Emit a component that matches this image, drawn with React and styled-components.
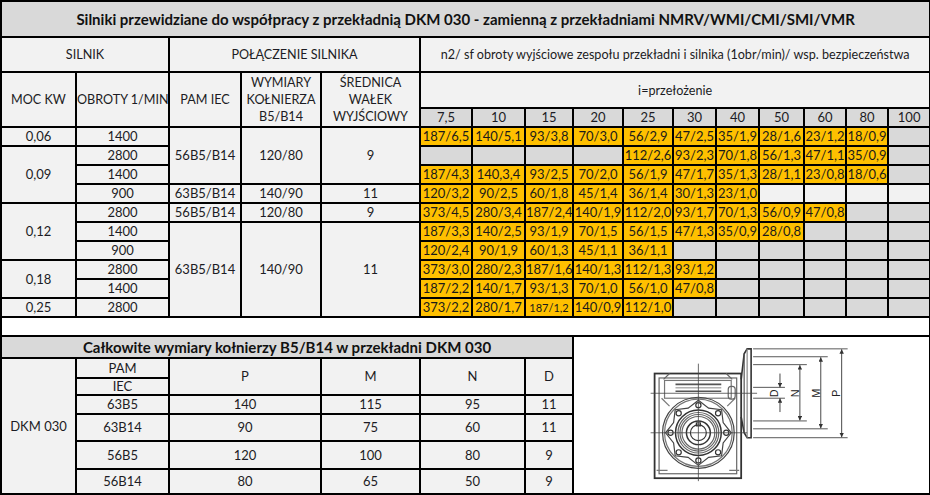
import React from 'react'
import styled, { createGlobalStyle } from 'styled-components'

const GlobalStyle = createGlobalStyle`
  html, body {
    margin: 0;
    padding: 0;
    background: #ffffff;
  }
  body {
    font-family: Lato, "Open Sans", sans-serif;
    color: #1c1c24;
  }
`

const ratios = ['7,5', '10', '15', '20', '25', '30', '40', '50', '60', '80', '100']
const colWidths = [75, 93, 72, 80, 99, 52, 53, 48, 50, 50, 43, 43, 45, 42, 42, 42]

// value rows: o = orange with text, g = grey, l = light
const fill = (vals, total, rest) =>
  vals.concat(Array(total - vals.length).fill(rest))

const dataRows = [
  {
    left: [
      { text: '0,06' },
      { text: '1400' },
      { text: '56B5/B14', rows: 3 },
      { text: '120/80', rows: 3 },
      { text: '9', rows: 3 },
    ],
    values: fill(['187/6,5', '140/5,1', '93/3,8', '70/3,0', '56/2,9', '47/2,5', '35/1,9', '28/1,6', '23/1,2', '18/0,9'], 11, 'g'),
  },
  {
    left: [{ text: '0,09', rows: 3 }, { text: '2800' }],
    values: ['g', 'g', 'g', 'g', '112/2,6', '93/2,3', '70/1,8', '56/1,3', '47/1,1', '35/0,9', 'g'],
  },
  {
    left: [{ text: '1400' }],
    values: fill(['187/4,3', '140,3,4', '93/2,5', '70/2,0', '56/1,9', '47/1,7', '35/1,3', '28/1,1', '23/0,8', '18/0,6'], 11, 'g'),
  },
  {
    left: [{ text: '900' }, { text: '63B5/B14' }, { text: '140/90' }, { text: '11' }],
    values: fill(['120/3,2', '90/2,5', '60/1,8', '45/1,4', '36/1,4', '30/1,3', '23/1,0'], 11, 'l'),
  },
  {
    left: [
      { text: '0,12', rows: 3 },
      { text: '2800' },
      { text: '56B5/B14' },
      { text: '120/80' },
      { text: '9' },
    ],
    values: fill(['373/4,5', '280/3,4', '187/2,4', '140/1,9', '112/2,0', '93/1,7', '70/1,3', '56/0,9', '47/0,8'], 11, 'g'),
  },
  {
    left: [
      { text: '1400' },
      { text: '63B5/B14', rows: 5 },
      { text: '140/90', rows: 5 },
      { text: '11', rows: 5 },
    ],
    values: fill(['187/3,3', '140/2,5', '93/1,9', '70/1,5', '56/1,5', '47/1,3', '35/0,9', '28/0,8'], 11, 'g'),
  },
  {
    left: [{ text: '900' }],
    values: fill(['120/2,4', '90/1,9', '60/1,3', '45/1,1', '36/1,1'], 11, 'g'),
  },
  {
    left: [{ text: '0,18', rows: 2 }, { text: '2800' }],
    values: fill(['373/3,0', '280/2,3', '187/1,6', '140/1,3', '112/1,3', '93/1,2'], 11, 'g'),
  },
  {
    left: [{ text: '1400' }],
    values: fill(['187/2,2', '140/1,7', '93/1,3', '70/1,0', '56/1,0', '47/0,8'], 11, 'g'),
  },
  {
    left: [{ text: '0,25' }, { text: '2800' }],
    values: fill(['373/2,2', '280/1,7', '*187/1,2', '140/0,9', '112/1,0'], 11, 'g'),
  },
]

const flanges = [
  { iec: '63B5', p: '140', m: '115', n: '95', d: '11', h: 19 },
  { iec: '63B14', p: '90', m: '75', n: '60', d: '11', h: 27 },
  { iec: '56B5', p: '120', m: '100', n: '80', d: '9', h: 28 },
  { iec: '56B14', p: '80', m: '65', n: '50', d: '9', h: 25 },
]

export default function App() {
  return (
    <>
      <GlobalStyle />
      <Sheet>
        <colgroup>
          {colWidths.map((w, i) => (
            <Col key={i} $w={w} />
          ))}
        </colgroup>
        <tbody>
          <Row $h={36}>
            <TitleCell colSpan={16}>
              Silniki przewidziane do współpracy z przekładnią DKM 030 - zamienną z przekładniami NMRV/WMI/CMI/SMI/VMR
            </TitleCell>
          </Row>
          <Row $h={35}>
            <HeadCell colSpan={2}>SILNIK</HeadCell>
            <HeadCell colSpan={3}>POŁĄCZENIE SILNIKA</HeadCell>
            <HeadCell colSpan={11}>
              n2/ sf obroty wyjściowe zespołu przekładni i silnika (1obr/min)/ wsp. bezpieczeństwa
            </HeadCell>
          </Row>
          <Row $h={36}>
            <HeadCell rowSpan={2}>MOC KW</HeadCell>
            <HeadCell rowSpan={2}>OBROTY 1/MIN</HeadCell>
            <HeadCell rowSpan={2}>PAM IEC</HeadCell>
            <HeadCell rowSpan={2} $multi>
              WYMIARY
              <br />
              KOŁNIERZA
              <br />
              B5/B14
            </HeadCell>
            <HeadCell rowSpan={2} $multi>
              ŚREDNICA
              <br />
              WAŁEK
              <br />
              WYJŚCIOWY
            </HeadCell>
            <HeadCell colSpan={11}>i=przełożenie</HeadCell>
          </Row>
          <Row $h={19}>
            {ratios.map((r) => (
              <RatioCell key={r}>{r}</RatioCell>
            ))}
          </Row>
          {dataRows.map((row, i) => (
            <Row key={i} $h={19}>
              {row.left.map((c, j) => (
                <InfoCell key={j} rowSpan={c.rows || 1}>
                  {c.text}
                </InfoCell>
              ))}
              {row.values.map((v, j) => {
                if (v === 'g' || v === 'l') return <ValueCell key={j} $tone={v} />
                const small = v.startsWith('*')
                return (
                  <ValueCell key={j} $tone="o" $small={small}>
                    {small ? v.slice(1) : v}
                  </ValueCell>
                )
              })}
            </Row>
          ))}
          <Row $h={19}>
            <BlankCell colSpan={16} />
          </Row>
          <Row $h={22}>
            <TitleCell colSpan={8} $size={15}>
              Całkowite wymiary kołnierzy B5/B14 w przekładni DKM 030
            </TitleCell>
            <DrawingCell colSpan={8} rowSpan={7}>
              <GearDrawing />
            </DrawingCell>
          </Row>
          <Row $h={20}>
            <InfoCell rowSpan={6}>DKM 030</InfoCell>
            <InfoCell>PAM</InfoCell>
            <InfoCell colSpan={2} rowSpan={2}>P</InfoCell>
            <InfoCell rowSpan={2}>M</InfoCell>
            <InfoCell colSpan={2} rowSpan={2}>N</InfoCell>
            <InfoCell rowSpan={2}>D</InfoCell>
          </Row>
          <Row $h={17}>
            <InfoCell>IEC</InfoCell>
          </Row>
          {flanges.map((f) => (
            <Row key={f.iec} $h={f.h}>
              <InfoCell>{f.iec}</InfoCell>
              <InfoCell colSpan={2}>{f.p}</InfoCell>
              <InfoCell>{f.m}</InfoCell>
              <InfoCell colSpan={2}>{f.n}</InfoCell>
              <InfoCell>{f.d}</InfoCell>
            </Row>
          ))}
        </tbody>
      </Sheet>
    </>
  )
}

function GearDrawing() {
  const cx = 697
  const cy = 432
  const lobes = []
  for (let i = 0; i < 16; i++) {
    const a = (i / 16) * Math.PI * 2 - Math.PI / 2
    const r = i % 2 === 0 ? 33 : 27
    lobes.push(`${(cx + r * Math.cos(a)).toFixed(1)},${(cy + r * Math.sin(a)).toFixed(1)}`)
  }
  const holes = []
  for (let i = 0; i < 8; i++) {
    const a = (i / 8) * Math.PI * 2 - Math.PI / 2
    holes.push([cx + 28 * Math.cos(a), cy + 28 * Math.sin(a)])
  }
  return (
    <Drawing viewBox="572 335 357 158" preserveAspectRatio="none">
      <defs>
        <marker id="arr" viewBox="0 0 6 6" refX="6" refY="3" markerWidth="5" markerHeight="5" orient="auto-start-reverse">
          <path d="M0,0 L6,3 L0,6 z" fill="#333" />
        </marker>
      </defs>
      <g fill="none" stroke="#333" strokeWidth="1.2">
        {/* housing */}
        <rect x="653" y="372" width="87" height="106" strokeWidth="1.8" />
        <rect x="657.5" y="376.5" width="78" height="97" stroke="#666" />
        <path d="M662 378 L668 372 M731 378 L725 372" stroke="#666" />
        <rect x="663" y="379" width="67" height="18" stroke="#777" />
        <line x1="674" y1="383" x2="720" y2="383" stroke="#555" strokeWidth="1.6" />
        <line x1="674" y1="386.5" x2="720" y2="386.5" stroke="#888" strokeWidth="1" />
        <line x1="674" y1="390" x2="720" y2="390" stroke="#555" strokeWidth="1.6" />
        <line x1="660" y1="397" x2="668" y2="405" stroke="#777" />
        <line x1="734" y1="397" x2="726" y2="405" stroke="#777" />
        <rect x="727" y="385" width="7" height="13" rx="3" stroke="#666" />
        <path d="M655 470 L666 470 M728 470 L738 470" stroke="#777" />
        {/* flange */}
        <path d="M740 378 L743 352 L746 347 L750 347 L750 437 L746 437 L743 432 L740 416" strokeWidth="1.6" />
        <line x1="743" y1="352" x2="743" y2="432" stroke="#555" />
        <line x1="746" y1="347" x2="746" y2="437" stroke="#888" />
        {/* wheel */}
        <circle cx={cx} cy={cy} r="36" stroke="#444" />
        <circle cx={cx} cy={cy} r="34" stroke="#777" />
        <polygon points={lobes.join(' ')} stroke="#444" />
        <circle cx={cx} cy={cy} r="23" stroke="#333" strokeWidth="1.5" />
        <circle cx={cx} cy={cy} r="20.5" stroke="#666" />
        <circle cx={cx} cy={cy} r="18.5" stroke="#666" />
        <circle cx={cx} cy={cy} r="16.5" stroke="#666" />
        <circle cx={cx} cy={cy} r="12" stroke="#333" strokeWidth="1.5" />
        <circle cx={cx} cy={cy} r="8" stroke="#333" />
        <rect x={cx - 2} y={cy - 10} width="4" height="3" stroke="#333" />
        {holes.map(([x, y], i) => (
          <circle key={i} cx={x} cy={y} r="2.6" stroke="#333" />
        ))}
        {/* center lines */}
        <g stroke="#444" strokeWidth="0.8">
          <line x1="649" y1="392" x2="756" y2="392" />
          <line x1="649" y1={cy} x2="746" y2={cy} />
          <line x1={cx} y1="362" x2={cx} y2="481" />
        </g>
        {/* extension lines */}
        <g stroke="#444" strokeWidth="0.9">
          <line x1="752" y1="347" x2="847" y2="347" />
          <line x1="752" y1="437" x2="847" y2="437" />
          <line x1="752" y1="355" x2="827" y2="355" />
          <line x1="752" y1="428" x2="827" y2="428" />
          <line x1="752" y1="363" x2="806" y2="363" />
          <line x1="752" y1="420" x2="806" y2="420" />
          <line x1="752" y1="386" x2="784" y2="386" />
          <line x1="752" y1="397" x2="784" y2="397" />
        </g>
        {/* dimension arrows */}
        <g stroke="#333" strokeWidth="0.9">
          <line x1="841" y1="347.5" x2="841" y2="436.5" markerStart="url(#arr)" markerEnd="url(#arr)" />
          <line x1="820" y1="355.5" x2="820" y2="427.5" markerStart="url(#arr)" markerEnd="url(#arr)" />
          <line x1="799" y1="363.5" x2="799" y2="419.5" markerStart="url(#arr)" markerEnd="url(#arr)" />
          <line x1="779" y1="372" x2="779" y2="386" markerEnd="url(#arr)" />
          <line x1="779" y1="411" x2="779" y2="397" markerEnd="url(#arr)" />
        </g>
      </g>
      <g fontFamily="'Liberation Sans', Arial, sans-serif" fontSize="11" fill="#222">
        <DimLabel x="773" y="392" transform="rotate(-90 773 392)">D</DimLabel>
        <DimLabel x="794" y="392" transform="rotate(-90 794 392)">N</DimLabel>
        <DimLabel x="815" y="392" transform="rotate(-90 815 392)">M</DimLabel>
        <DimLabel x="835" y="392" transform="rotate(-90 835 392)">P</DimLabel>
      </g>
    </Drawing>
  )
}

const Sheet = styled.table`
  width: 930px;
  height: 495px;
  table-layout: fixed;
  border-collapse: collapse;
  border: 2px solid #000;
  font-size: 12.6px;
`

const Col = styled.col`
  width: ${({ $w }) => $w}px;
`

const Row = styled.tr`
  height: ${({ $h }) => $h}px;
`

const cellBase = `
  border: 2px solid #000;
  padding: 0;
  text-align: center;
  vertical-align: middle;
  white-space: nowrap;
  overflow: hidden;
  line-height: 15px;
`

const TitleCell = styled.td`
  ${cellBase}
  background: #d9d9d9;
  font-weight: 700;
  font-size: ${({ $size }) => $size || 15}px;
  color: #111;
`

const HeadCell = styled.td`
  ${cellBase}
  background: #f2f2f2;
  line-height: ${({ $multi }) => ($multi ? '17px' : '15px')};
`

const RatioCell = styled.td`
  ${cellBase}
  background: #d9d9d9;
  font-size: 13px;
`

const InfoCell = styled.td`
  ${cellBase}
  background: #f2f2f2;
  font-size: 13px;
`

const toneColors = { o: '#ffc000', g: '#d9d9d9', l: '#f2f2f2' }

const ValueCell = styled.td`
  ${cellBase}
  background: ${({ $tone }) => toneColors[$tone]};
  font-size: ${({ $small }) => ($small ? '11px' : '13px')};
  color: #1a1a1a;
`

const BlankCell = styled.td`
  ${cellBase}
  background: #ffffff;
`

const DrawingCell = styled.td`
  ${cellBase}
  background: #ffffff;
  position: relative;
`

const Drawing = styled.svg`
  display: block;
  width: 100%;
  height: 100%;
  position: absolute;
  inset: 0;
`

const DimLabel = styled.text`
  text-anchor: middle;
  dominant-baseline: central;
`
